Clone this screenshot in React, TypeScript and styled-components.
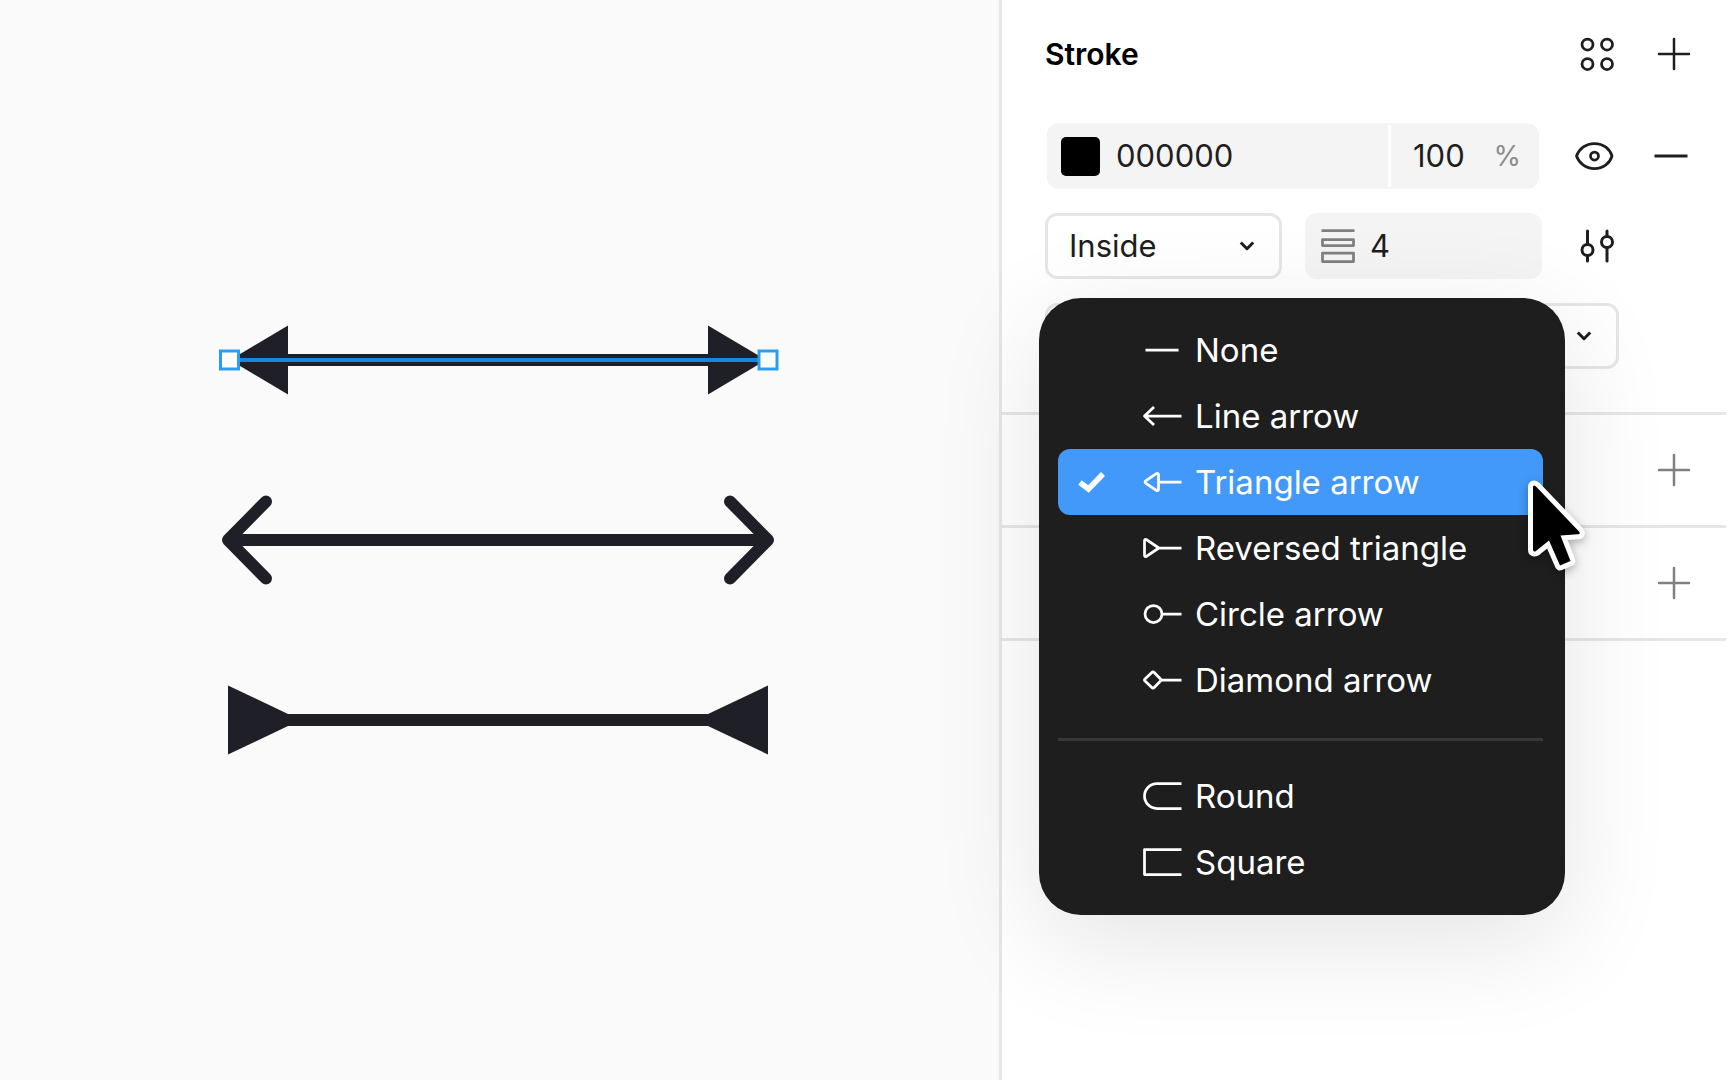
import React from "react";
import styled, { createGlobalStyle } from "styled-components";

const GlobalStyle = createGlobalStyle`
  *, *::before, *::after { box-sizing: border-box; }
  body {
    margin: 0;
    background: #fff;
    color: #1e1e1e;
    font-family: Inter, "Liberation Sans", sans-serif;
    font-size: 31px;
    line-height: 40px;
    font-optical-sizing: none;
  }
  button, input, select {
    margin: 0;
    padding: 0;
    border: 0;
    background: none;
    color: inherit;
    font: inherit;
    outline: none;
  }
  svg { display: block; flex: none; }
`;

const Workspace = styled.div`
  display: flex;
  min-height: 100vh;
  overflow: hidden;
`;

const Canvas = styled.main`
  flex: 1;
  min-width: 0;
  display: flex;
  align-items: center;
  justify-content: center;
  background: #fafafa;
`;

const Panel = styled.aside`
  flex: none;
  width: 729px;
  padding-right: 2px;
  border-left: 3px solid #e6e6e6;
  background: #fff;
`;

const Section = styled.section`
  display: flex;
  flex-direction: column;
  gap: 24px;
  padding: 21px 19px 43px 43px;
  border-bottom: 3px solid #e6e6e6;
`;

const CollapsedSection = styled.section`
  display: flex;
  align-items: center;
  justify-content: flex-end;
  height: 113px;
  padding-right: 19px;
  border-bottom: 3px solid #e6e6e6;
`;

const Row = styled.div<{ $inset?: boolean }>`
  display: flex;
  align-items: center;
  gap: 22px;
  height: 66px;
  padding: ${(p) => (p.$inset ? "0 3px 0 2px" : "0")};
`;

const Header = styled(Row)`
  margin-bottom: 12px;
`;

const Title = styled.h2`
  flex: 1;
  margin: 0;
  color: #000;
  font-size: 30px;
  font-weight: 600;
`;

const Actions = styled.div`
  display: grid;
  grid-template-columns: 66px 66px;
  gap: 11px;
`;

const IconButton = styled.button<{ $muted?: boolean }>`
  display: flex;
  align-items: center;
  justify-content: center;
  width: 66px;
  height: 66px;
  color: ${(p) => (p.$muted ? "#808080" : "#1e1e1e")};
`;

const PaintField = styled.div`
  flex: 1;
  min-width: 0;
  display: flex;
  align-items: center;
  height: 66px;
  border-radius: 12px;
  background: #f4f4f4;
`;

const Swatch = styled.button`
  flex: none;
  width: 39px;
  height: 39px;
  margin: 0 16px 0 14px;
  border-radius: 5px;
  background: #000;
`;

const TextInput = styled.input`
  flex: 1;
  width: 100%;
  min-width: 0;
  height: 40px;
`;

const Opacity = styled.label`
  display: flex;
  align-items: center;
  width: 151px;
  height: 62px;
  padding: 0 18px 0 22px;
  border-left: 3px solid #fff;
`;

const Unit = styled.span`
  color: #8c8c8c;
  font-size: 28px;
`;

const FieldPair = styled.div`
  flex: 1;
  display: grid;
  grid-template-columns: 1fr 1fr;
  gap: 23px;
`;

const SelectBox = styled.label`
  position: relative;
  display: flex;
  align-items: center;
  height: 66px;
  border: 3px solid #e6e6e6;
  border-radius: 12px;
`;

const Select = styled.select`
  width: 100%;
  height: 60px;
  padding: 0 48px 0 21px;
  appearance: none;
`;

const SelectChevron = styled.span`
  position: absolute;
  right: 24px;
  pointer-events: none;
`;

const WeightField = styled.label`
  display: flex;
  align-items: center;
  gap: 15px;
  height: 66px;
  padding: 0 16px;
  border-radius: 12px;
  background: #f4f4f4;
  color: #808080;
`;

const WeightInput = styled(TextInput)`
  color: #1e1e1e;
`;

const EndpointPicker = styled.div`
  position: relative;
  width: 574px;
`;

const EndpointButton = styled.button`
  display: flex;
  align-items: center;
  justify-content: flex-end;
  width: 100%;
  height: 66px;
  padding: 0 24px;
  border: 3px solid #e6e6e6;
  border-radius: 12px;
`;

const Menu = styled.div`
  position: absolute;
  z-index: 1;
  top: -5px;
  left: -6px;
  width: 526px;
  padding: 19px 22px 20px 19px;
  border-radius: 42px;
  background: #1e1e1e;
  color: #fff;
  font-size: 33px;
  box-shadow: 0 27px 110px rgba(0, 0, 0, 0.11);
`;

const MenuItem = styled.button<{ $selected?: boolean }>`
  position: relative;
  display: grid;
  grid-template-columns: 28px 40px 1fr;
  column-gap: 13px;
  align-items: center;
  width: 100%;
  height: 66px;
  padding-left: 20px;
  border-radius: 12px;
  background: ${(p) => (p.$selected ? "#4299f9" : "transparent")};
  text-align: left;
`;

const ItemIcon = styled.span`
  grid-column: 2;
  margin-left: 23px;
`;

const ItemLabel = styled.span`
  grid-column: 3;
  margin-left: 23px;
  white-space: nowrap;
`;

const ItemCheck = styled.span`
  grid-column: 1;
`;

const MenuDivider = styled.hr`
  height: 3px;
  margin: 25px 0 22px;
  border: 0;
  background: #383838;
`;

const Pointer = styled.svg`
  position: absolute;
  top: 27px;
  right: -48px;
  overflow: visible;
  pointer-events: none;
  filter: drop-shadow(0 3px 5px rgba(0, 0, 0, 0.3));
`;

const CanvasDrawing = () => (
  <svg width="561" height="440" viewBox="219 320 561 440" role="img" aria-label="Arrows">
    <g fill="#1f1f27">
      <path d="M230 360 288 325.500V354H708V325.500L766 360 708 394.500V366H288V394.500Z" />
      <path d="M228 685.500 288 714H708L768 685.500V754.500L708 726H288L228 754.500Z" />
    </g>
    <g fill="none" stroke="#1f1f27" strokeWidth="12" strokeLinecap="round" strokeLinejoin="round">
      <path d="M228 540H768M266 501.500 228 540l38 38.500M730 501.500 768 540l-38 38.500" />
    </g>
    <path d="M240 360H758" stroke="#1488e0" strokeWidth="4" />
    <g fill="#fff" stroke="#2b9df0" strokeWidth="3">
      <rect x="220.500" y="351" width="18" height="18" />
      <rect x="759" y="351" width="18" height="18" />
    </g>
  </svg>
);

const stroke = { fill: "none", stroke: "currentColor", strokeWidth: 3 } as const;

const PlusIcon = () => (
  <svg width="34" height="34" viewBox="0 0 34 34" {...stroke} strokeWidth={2.5} strokeLinecap="round">
    <path d="M2 17H32M17 2v30" />
  </svg>
);

const MinusIcon = () => (
  <svg width="34" height="34" viewBox="0 0 34 34" {...stroke}>
    <path d="M.5 17h33" />
  </svg>
);

const StylesIcon = () => (
  <svg width="34" height="34" viewBox="0 0 34 34" {...stroke} strokeWidth={2.75}>
    <circle cx="7.500" cy="7.500" r="5.500" />
    <circle cx="27" cy="7.500" r="5.500" />
    <circle cx="7.500" cy="27" r="5.500" />
    <circle cx="27" cy="27" r="5.500" />
  </svg>
);

const EyeIcon = () => (
  <svg width="40" height="30" viewBox="0 0 40 30" {...stroke} strokeWidth={2.75}>
    <path
      strokeLinejoin="round"
      d="M2.500 15C5 8 11.500 2.500 20.500 2.500S36 8 38 15c-2 7-8.500 12.500-17.500 12.500S5 22 2.500 15Z"
    />
    <circle cx="20.500" cy="15" r="4" />
  </svg>
);

const SlidersIcon = () => (
  <svg width="34" height="34" viewBox="0 0 34 34" {...stroke} strokeLinecap="round">
    <path d="M7.500 2v13.500M7.500 27v5M27 2v5M27 18.500V32" />
    <circle cx="7.500" cy="21" r="5.500" />
    <circle cx="27" cy="13" r="5.500" />
  </svg>
);

const WeightIcon = () => (
  <svg width="34" height="34" viewBox="0 0 34 34" {...stroke} strokeWidth={2.75} strokeLinejoin="round">
    <path d="M.5 1.500h33" />
    <rect x="1.500" y="10.500" width="31" height="6" />
    <rect x="1.500" y="24" width="31" height="8.500" />
  </svg>
);

const ChevronIcon = () => (
  <svg width="16" height="12" viewBox="0 0 16 12" {...stroke} strokeLinejoin="round">
    <path d="M1.800 2.500 8 8.700l6.200-6.200" />
  </svg>
);

const CheckIcon = () => (
  <svg width="28" height="22" viewBox="0 0 28 22" fill="none" stroke="currentColor" strokeWidth="5.500">
    <path d="M2 11.500 10.500 18 25 3" />
  </svg>
);

const endpointPaths = {
  none: "M3.500 20h33",
  line: "M39.500 20H3M12 11 2.500 20l9.500 9",
  triangle: "M39.500 20H17M4 18.700 14 11.800Q16.500 10.500 16.500 13V27Q16.500 29.500 14 28.200L4 21.300Q2 20 4 18.700Z",
  reversed: "M39.500 20H17M2.500 13Q2.500 10.500 4.800 11.800L16.800 20 4.800 28.200Q2.500 29.500 2.500 27Z",
  circle: "M39.500 20H20M20 20A8.500 8.500 0 1 1 3 20 8.500 8.500 0 1 1 20 20Z",
  diamond: "M39.500 20H19M9.800 12.500Q11 11.300 12.200 12.500L19.500 20 12.200 27.500Q11 28.700 9.800 27.500L3 21Q2 20 3 19Z",
  round: "M39.500 7.500H15A12.500 12.500 0 0 0 15 32.500H39.500",
  square: "M39.500 7.500H2.500V32.500H39.500",
};

type Endpoint = keyof typeof endpointPaths;

const EndpointIcon = ({ kind }: { kind: Endpoint }) => (
  <svg width="40" height="40" viewBox="0 0 40 40" {...stroke} strokeWidth={2.75} strokeLinejoin="round">
    <path d={endpointPaths[kind]} />
  </svg>
);

const PointerArrow = () => (
  <Pointer width="68" height="100" viewBox="0 0 68 100" aria-hidden="true">
    <path
      d="M10 11.500Q10 8 13 10.500L56 55.500Q58 58 55 58.200L37.500 59.500 47.500 85 37 89.500 26 64.500 13 75Q10 76.500 10 73.500Z"
      fill="#000"
      stroke="#fff"
      strokeWidth="10"
      strokeLinejoin="round"
      paintOrder="stroke"
    />
  </Pointer>
);

const arrowItems: { kind: Endpoint; label: string }[] = [
  { kind: "none", label: "None" },
  { kind: "line", label: "Line arrow" },
  { kind: "triangle", label: "Triangle arrow" },
  { kind: "reversed", label: "Reversed triangle" },
  { kind: "circle", label: "Circle arrow" },
  { kind: "diamond", label: "Diamond arrow" },
];

const capItems: { kind: Endpoint; label: string }[] = [
  { kind: "round", label: "Round" },
  { kind: "square", label: "Square" },
];

const Item = ({ kind, label, selected }: { kind: Endpoint; label: string; selected?: boolean }) => (
  <MenuItem type="button" role="menuitemradio" aria-checked={!!selected} $selected={selected}>
    {selected && (
      <ItemCheck>
        <CheckIcon />
      </ItemCheck>
    )}
    <ItemIcon>
      <EndpointIcon kind={kind} />
    </ItemIcon>
    <ItemLabel>{label}</ItemLabel>
    {selected && <PointerArrow />}
  </MenuItem>
);

const EndpointMenu = () => (
  <Menu role="menu" aria-label="Endpoint">
    {arrowItems.map((item) => (
      <Item key={item.kind} {...item} selected={item.kind === "triangle"} />
    ))}
    <MenuDivider />
    {capItems.map((item) => (
      <Item key={item.kind} {...item} />
    ))}
  </Menu>
);

export default function App() {
  return (
    <>
      <GlobalStyle />
      <Workspace>
        <Canvas>
          <CanvasDrawing />
        </Canvas>
        <Panel>
          <Section>
            <Header>
              <Title>Stroke</Title>
              <Actions>
                <IconButton type="button" aria-label="Styles">
                  <StylesIcon />
                </IconButton>
                <IconButton type="button" aria-label="Add stroke">
                  <PlusIcon />
                </IconButton>
              </Actions>
            </Header>
            <Row $inset>
              <PaintField>
                <Swatch type="button" aria-label="Pick color" />
                <TextInput aria-label="Color" defaultValue="000000" />
                <Opacity>
                  <TextInput aria-label="Opacity" defaultValue="100" />
                  <Unit>%</Unit>
                </Opacity>
              </PaintField>
              <Actions>
                <IconButton type="button" aria-label="Toggle visibility">
                  <EyeIcon />
                </IconButton>
                <IconButton type="button" aria-label="Remove stroke">
                  <MinusIcon />
                </IconButton>
              </Actions>
            </Row>
            <Row>
              <FieldPair>
                <SelectBox>
                  <Select aria-label="Stroke position" defaultValue="Inside">
                    <option>Inside</option>
                  </Select>
                  <SelectChevron>
                    <ChevronIcon />
                  </SelectChevron>
                </SelectBox>
                <WeightField>
                  <WeightIcon />
                  <WeightInput aria-label="Stroke weight" defaultValue="4" />
                </WeightField>
              </FieldPair>
              <Actions>
                <IconButton type="button" aria-label="Stroke settings">
                  <SlidersIcon />
                </IconButton>
              </Actions>
            </Row>
            <EndpointPicker>
              <EndpointButton type="button" aria-haspopup="menu" aria-expanded="true" aria-label="Endpoint">
                <ChevronIcon />
              </EndpointButton>
              <EndpointMenu />
            </EndpointPicker>
          </Section>
          <CollapsedSection aria-label="Effects">
            <IconButton type="button" $muted aria-label="Add effect">
              <PlusIcon />
            </IconButton>
          </CollapsedSection>
          <CollapsedSection aria-label="Export">
            <IconButton type="button" $muted aria-label="Add export">
              <PlusIcon />
            </IconButton>
          </CollapsedSection>
        </Panel>
      </Workspace>
    </>
  );
}
